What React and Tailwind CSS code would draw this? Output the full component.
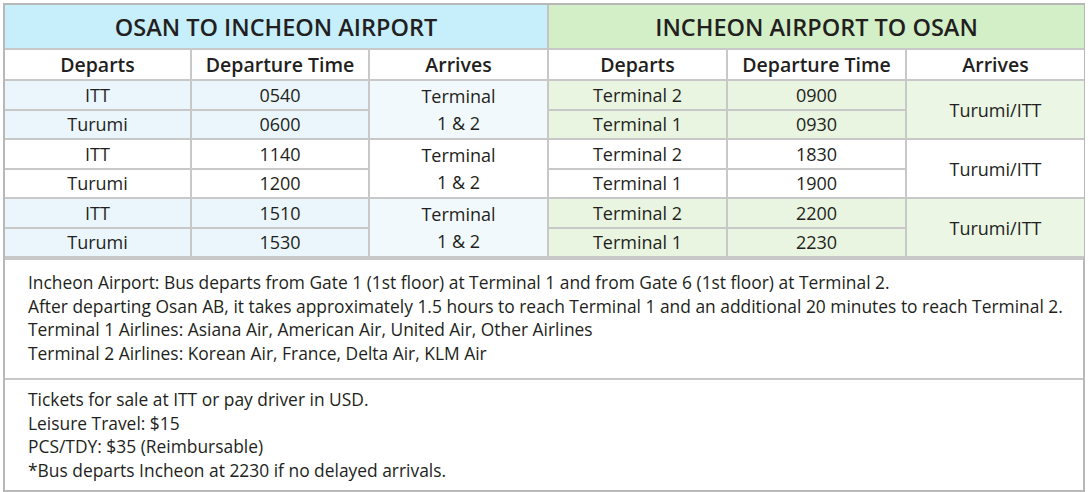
import React from "react";

const font = { fontFamily: "'Open Sans', Lato, sans-serif" };

const groups = [
  {
    tint: true,
    left: [["ITT", "0540"], ["Turumi", "0600"]],
    right: [["Terminal 2", "0900"], ["Terminal 1", "0930"]],
  },
  {
    tint: false,
    left: [["ITT", "1140"], ["Turumi", "1200"]],
    right: [["Terminal 2", "1830"], ["Terminal 1", "1900"]],
  },
  {
    tint: true,
    left: [["ITT", "1510"], ["Turumi", "1530"]],
    right: [["Terminal 2", "2200"], ["Terminal 1", "2230"]],
  },
];

export default function App() {
  return (
    <div className="w-[1088px] h-[492px] bg-white p-[3px] text-[#231f20]" style={font}>
      <div className="border-2 border-[#b8b8b8]">
        <table className="w-full table-fixed border-collapse">
          <colgroup>
            <col className="w-[186px]" />
            <col className="w-[178px]" />
            <col className="w-[179px]" />
            <col className="w-[179px]" />
            <col className="w-[179px]" />
            <col className="w-[178px]" />
          </colgroup>
          <tbody>
            <tr className="h-[44px]">
              <td colSpan={3} className="bg-[#c6eefb] text-center text-[23.5px] font-semibold border-r-2 border-[#c4c4c4] leading-none pt-[2px]">
                OSAN TO INCHEON AIRPORT
              </td>
              <td colSpan={3} className="bg-[#d3efc8] text-center text-[23.5px] font-semibold leading-none pt-[2px]">
                INCHEON AIRPORT TO OSAN
              </td>
            </tr>
            <tr className="h-[31px] text-[19.5px] font-semibold leading-none">
              {["Departs", "Departure Time", "Arrives", "Departs", "Departure Time", "Arrives"].map((t, i) => (
                <td key={i} className="text-center border-2 border-[#c8c8c8] first:border-l-0 last:border-r-0 bg-white">
                  {t}
                </td>
              ))}
            </tr>
            {groups.map((g, gi) =>
              g.left.map((l, ri) => (
                <tr key={gi + "-" + ri} className="h-[29.5px] text-[18px] leading-none">
                  <td className={"p-0 text-center border-2 border-l-0 border-[#c8c8c8] " + (g.tint ? "bg-[#eaf6fc]" : "bg-white")}>{l[0]}</td>
                  <td className={"p-0 text-center border-2 border-[#c8c8c8] " + (g.tint ? "bg-[#eaf6fc]" : "bg-white")}>{l[1]}</td>
                  {ri === 0 && (
                    <td rowSpan={2} className={"p-0 text-center leading-[27px] border-2 border-[#c8c8c8] " + (g.tint ? "bg-[#f1f9fd]" : "bg-white")}>
                      Terminal
                      <br />1 &amp; 2
                    </td>
                  )}
                  <td className={"p-0 text-center border-2 border-[#c8c8c8] " + (g.tint ? "bg-[#e9f5e1]" : "bg-white")}>{g.right[ri][0]}</td>
                  <td className={"p-0 text-center border-2 border-[#c8c8c8] " + (g.tint ? "bg-[#e9f5e1]" : "bg-white")}>{g.right[ri][1]}</td>
                  {ri === 0 && (
                    <td rowSpan={2} className={"p-0 text-center border-2 border-r-0 border-[#c8c8c8] " + (g.tint ? "bg-[#ebf6e4]" : "bg-white")}>
                      Turumi/ITT
                    </td>
                  )}
                </tr>
              ))
            )}
          </tbody>
        </table>
        <div className="h-[120px] border-t-2 border-[#c8c8c8] pl-[23px] pt-[11px] text-[17.4px] leading-[23.7px]">
          <div>Incheon Airport: Bus departs from Gate 1 (1st floor) at Terminal 1 and from Gate 6 (1st floor) at Terminal 2.</div>
          <div>After departing Osan AB, it takes approximately 1.5 hours to reach Terminal 1 and an additional 20 minutes to reach Terminal 2.</div>
          <div>Terminal 1 Airlines: Asiana Air, American Air, United Air, Other Airlines</div>
          <div>Terminal 2 Airlines: Korean Air, France, Delta Air, KLM Air</div>
        </div>
        <div className="h-[112px] border-t-2 border-[#c8c8c8] pl-[23px] pt-[8px] text-[17.4px] leading-[23.5px]">
          <div>Tickets for sale at ITT or pay driver in USD.</div>
          <div>Leisure Travel: $15</div>
          <div>PCS/TDY: $35 (Reimbursable)</div>
          <div>*Bus departs Incheon at 2230 if no delayed arrivals.</div>
        </div>
      </div>
    </div>
  );
}
